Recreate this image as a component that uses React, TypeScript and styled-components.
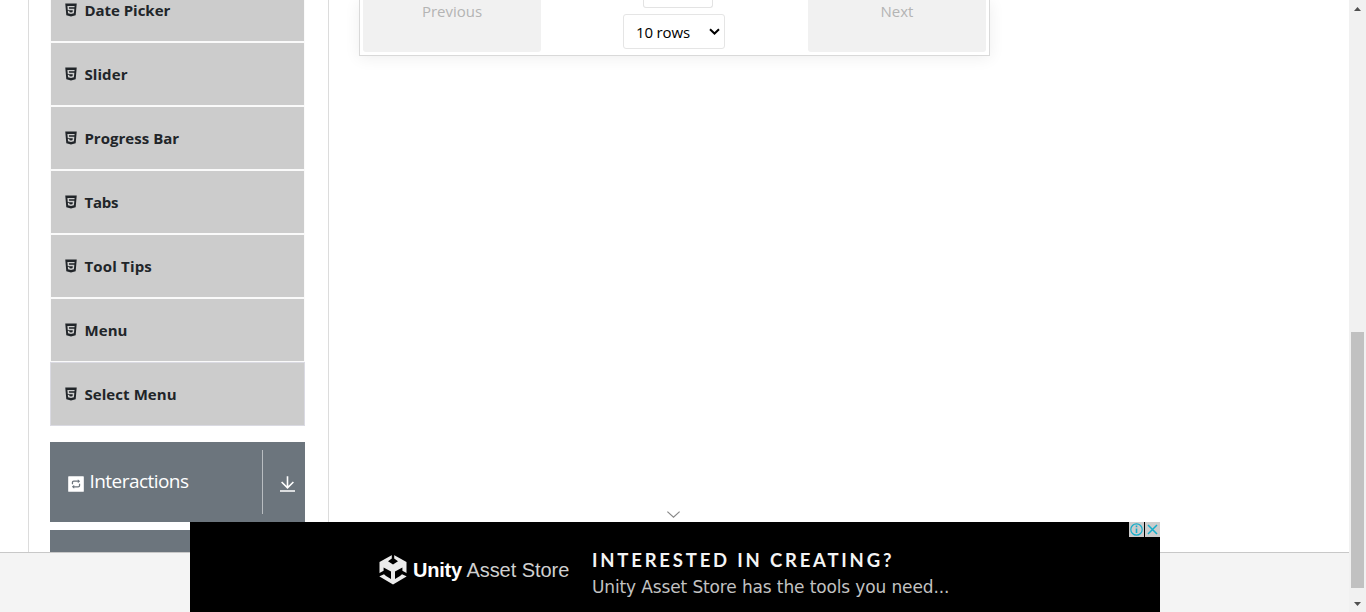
import React from "react";
import styled, { createGlobalStyle } from "styled-components";
import { AiFillHtml5, AiFillInteraction } from "react-icons/ai";

const GlobalStyle = createGlobalStyle`
  *, *::before, *::after { box-sizing: border-box; }
  html, body { margin: 0; height: 612px; overflow: hidden; background: #fff; }
  body { font-family: "Segoe UI", "Open Sans", "Noto Sans", sans-serif; font-size: 16px; color: #212529; }
`;

const Page = styled.div`
  display: flex;
  width: 1366px;
  height: 612px;
  overflow: hidden;
`;

const Viewport = styled.div`
  position: relative;
  display: flex;
  flex-direction: column;
  width: 1349px;
  height: 612px;
`;

const Main = styled.main`
  display: flex;
  align-items: flex-start;
  height: 552px;
  padding-left: 28px;
  overflow: hidden;
`;

const Footer = styled.footer`
  height: 60px;
  border-top: 1px solid #c8c8c8;
  background: #f4f4f4;
`;

const Sidebar = styled.aside`
  display: flex;
  flex-direction: column;
  flex: none;
  width: 301px;
  height: 552px;
  padding: 0 23px 0 21px;
  border: solid #dcdcdc;
  border-width: 0 1px;
`;

const MenuList = styled.ul`
  list-style: none;
  margin: -22px 0 16px;
  padding: 0;
`;

const MenuItem = styled.li<{ $last?: boolean }>`
  display: flex;
  align-items: center;
  height: 64px;
  padding-left: 12px;
  border: 1px solid ${(p) => (p.$last ? "#dadae2" : "#fafafa")};
  background: #ccc;
  color: #212529;
`;

const MenuText = styled.span<{ $spacing: number }>`
  margin-left: 5.4px;
  font-size: 15px;
  font-weight: 700;
  line-height: 24px;
  letter-spacing: ${(p) => p.$spacing}px;
`;

const SectionButton = styled.div`
  display: flex;
  flex: none;
  height: 80px;
  margin-bottom: 8px;
  padding: 8px 0;
  background: #6c757d;
  color: #fff;
`;

const SectionTitle = styled.div`
  display: flex;
  align-items: center;
  width: 213px;
  padding-left: 15.5px;
  border-right: 1px solid #b9bdc1;

  svg { margin-top: 3px; }
  span {
    margin: -2px 0 0 4px;
    font-size: 19px;
    letter-spacing: -0.55px;
  }
`;

const SectionToggle = styled.div`
  display: flex;
  align-items: center;
  justify-content: center;
  flex: 1;
  padding: 4px 0 0 7px;
`;

const Content = styled.section`
  padding-left: 30px;
`;

const Pagination = styled.div`
  display: flex;
  justify-content: space-between;
  width: 631px;
  height: 56px;
  padding: 0 3px 3px;
  border: 1px solid #d9d9d9;
  border-top: 0;
  box-shadow: 0 2px 15px rgba(0, 0, 0, 0.07);
`;

const PageButton = styled.div`
  width: 178px;
  height: 52px;
  border-radius: 0 0 3px 3px;
  background: #f1f1f1;
  color: #b4b4b4;
  font-size: 15px;
  line-height: 22px;
  text-align: center;
`;

const PageControls = styled.div`
  display: flex;
  flex-direction: column;
  align-items: center;
  padding-right: 1px;
`;

const PageInput = styled.div`
  width: 70px;
  height: 8px;
  margin-left: 8px;
  border: 1px solid #e3e3e3;
  border-top: 0;
  border-radius: 0 0 3px 3px;
`;

const RowSelect = styled.div`
  display: flex;
  align-items: center;
  justify-content: space-between;
  width: 102px;
  height: 35px;
  margin-top: 6px;
  padding: 1px 4px 0 12px;
  border: 1px solid #e5e5e5;
  border-radius: 3px;
  color: #000;
  font-size: 15px;
  letter-spacing: -0.15px;
`;

const Ad = styled.div`
  position: absolute;
  left: 190px;
  top: 522px;
  display: flex;
  align-items: flex-start;
  width: 970px;
  height: 90px;
  padding-left: 189px;
  background: #000;
  color: #f4f4f4;
`;

const AdHandle = styled.div`
  position: absolute;
  left: 666px;
  top: 510px;
  height: 9px;
  svg { display: block; }
`;

const AdBrand = styled.div`
  display: flex;
  align-items: center;
  width: 213px;
  padding-top: 32px;
`;

const BrandName = styled.div`
  margin-left: 6px;
  font-family: "Liberation Sans", sans-serif;
  font-size: 20px;
  line-height: 30px;
  letter-spacing: -0.05px;
  white-space: nowrap;
  color: #d0d0d0;

  b { color: #fff; letter-spacing: -0.2px; }
`;

const AdCopy = styled.div`
  padding-top: 26px;
  white-space: nowrap;
`;

const AdHeadline = styled.div`
  font-family: Lato, sans-serif;
  font-size: 18.5px;
  font-weight: 700;
  line-height: 24px;
  letter-spacing: 2.8px;
`;

const AdLine = styled.div`
  margin-top: 3px;
  font-family: "DejaVu Sans", sans-serif;
  font-size: 17px;
  line-height: 24px;
  letter-spacing: -0.13px;
  color: #c2c2c2;
`;

const AdChoices = styled.div`
  position: absolute;
  top: 0;
  right: 0;
  display: flex;
  gap: 1px;
`;

const AdChoice = styled.div`
  display: flex;
  align-items: center;
  justify-content: center;
  width: 15px;
  height: 15px;
  background: #ccc;
`;

const Scrollbar = styled.div`
  display: flex;
  flex-direction: column;
  align-items: center;
  width: 17px;
  height: 612px;
  background: #f1f1f1;
`;

const ScrollArrow = styled.div`
  display: flex;
  align-items: center;
  justify-content: center;
  width: 17px;
  height: 17px;
`;

const ScrollThumb = styled.div`
  width: 13px;
  height: 256px;
  margin: 315px 0 7px;
  background: #c1c1c1;
`;

const menu = [
  { name: "Date Picker", spacing: -0.02 },
  { name: "Slider", spacing: 0.1 },
  { name: "Progress Bar", spacing: 0.03 },
  { name: "Tabs", spacing: -0.2 },
  { name: "Tool Tips", spacing: 0.18 },
  { name: "Menu", spacing: 0.12 },
  { name: "Select Menu", spacing: 0.08 },
];

const DownIcon = () => (
  <svg width="15" height="16" viewBox="0 0 15 16" fill="none" stroke="#fff" strokeWidth="1.6">
    <path d="M7.5 0.3V11.5M1.6 6L7.5 11.8L13.4 6M0 15H15" />
  </svg>
);

const UnityLogo = () => (
  <svg width="28" height="31" viewBox="0 0 28 31">
    <path fill="#ececec" d="M14 0.5L27.5 8V22.5L14 30.5L0.5 22.5V8Z" />
    <path
      fill="#000"
      d="M12.8 0H15.2V4.6L19 7.2L14 10.4L9 7.2L12.8 4.6ZM4.6 13.4L12 17.6V25L7 22L5 20.2L0 22.4V19.2L4.6 16.8ZM23.4 13.4L16 17.6V25L21 22L23 20.2L28 22.4V19.2L23.4 16.8Z"
    />
  </svg>
);

export default function App() {
  return (
    <>
      <GlobalStyle />
      <Page>
        <Viewport>
          <Main>
            <Sidebar>
              <MenuList>
                {menu.map((item, i) => (
                  <MenuItem key={item.name} $last={i === menu.length - 1}>
                    <AiFillHtml5 size={16} />
                    <MenuText $spacing={item.spacing}>{item.name}</MenuText>
                  </MenuItem>
                ))}
              </MenuList>
              <SectionButton>
                <SectionTitle>
                  <AiFillInteraction size={20} />
                  <span>Interactions</span>
                </SectionTitle>
                <SectionToggle>
                  <DownIcon />
                </SectionToggle>
              </SectionButton>
              <SectionButton />
            </Sidebar>
            <Content>
              <Pagination>
                <PageButton>Previous</PageButton>
                <PageControls>
                  <PageInput />
                  <RowSelect>
                    10 rows
                    <svg width="11" height="8" viewBox="0 0 11 8" fill="none" stroke="#000" strokeWidth="2">
                      <path d="M1 1.2L5.5 5.5L10 1.2" />
                    </svg>
                  </RowSelect>
                </PageControls>
                <PageButton>Next</PageButton>
              </Pagination>
            </Content>
          </Main>
          <Footer />
          <AdHandle>
            <svg width="14" height="9" viewBox="0 0 14 9" fill="none" stroke="#888" strokeWidth="1.2">
              <path d="M1.4 1.6L7.5 7.3L13.6 1.6" />
            </svg>
          </AdHandle>
          <Ad>
            <AdBrand>
              <UnityLogo />
              <BrandName>
                <b>Unity</b> Asset Store
              </BrandName>
            </AdBrand>
            <AdCopy>
              <AdHeadline>INTERESTED IN CREATING?</AdHeadline>
              <AdLine>Unity Asset Store has the tools you need...</AdLine>
            </AdCopy>
            <AdChoices>
              <AdChoice>
                <svg width="15" height="15" viewBox="0 0 15 15" fill="none" stroke="#14aecb">
                  <circle cx="7.5" cy="7.5" r="5.7" strokeWidth="1.2" />
                  <path d="M7.5 6.5V11M7.5 3.6V5.2" strokeWidth="1.6" />
                </svg>
              </AdChoice>
              <AdChoice>
                <svg width="15" height="15" viewBox="0 0 15 15" fill="none" stroke="#14aecb" strokeWidth="1.5">
                  <path d="M3 3L12 12M12 3L3 12" />
                </svg>
              </AdChoice>
            </AdChoices>
          </Ad>
        </Viewport>
        <Scrollbar>
          <ScrollArrow>
            <svg width="7" height="4" viewBox="0 0 7 4"><path fill="#505050" d="M3.5 0L7 4H0Z" /></svg>
          </ScrollArrow>
          <ScrollThumb />
          <ScrollArrow>
            <svg width="7" height="4" viewBox="0 0 7 4"><path fill="#505050" d="M0 0H7L3.5 4Z" /></svg>
          </ScrollArrow>
        </Scrollbar>
      </Page>
    </>
  );
}
